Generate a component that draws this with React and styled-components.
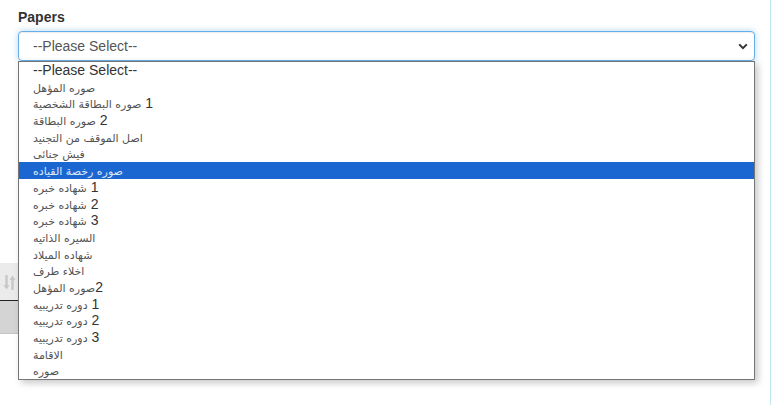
import React from "react";
import styled, { createGlobalStyle } from "styled-components";

const options = [
    { text: "--Please Select--", latin: true },
    { text: "صوره المؤهل" },
    { text: "صوره البطاقة الشخصية", num: " 1" },
    { text: "صوره البطاقة", num: " 2" },
    { text: "اصل الموقف من التجنيد" },
    { text: "فيش جنائى" },
    { text: "صوره رخصة القياده", selected: true },
    { text: "شهاده خبره", num: " 1" },
    { text: "شهاده خبره", num: " 2" },
    { text: "شهاده خبره", num: " 3" },
    { text: "السيره الذاتيه" },
    { text: "شهاده الميلاد" },
    { text: "اخلاء طرف" },
    { text: "صوره المؤهل", num: "2" },
    { text: "دوره تدريبيه", num: " 1" },
    { text: "دوره تدريبيه", num: " 2" },
    { text: "دوره تدريبيه", num: " 3" },
    { text: "الاقامة" },
    { text: "صوره" },
];

function App() {
    return (
        <>
            <GlobalStyle />
            <Panel>
                <FormGroup>
                    <Label>Papers</Label>
                    <SelectWrap>
                        <SelectBox>
                            <span>--Please Select--</span>
                            <svg width="10" height="7" viewBox="0 0 10 7">
                                <path
                                    d="M1.2 1.4 L5 5.2 L8.8 1.4"
                                    fill="none"
                                    stroke="#333"
                                    strokeWidth="2"
                                />
                            </svg>
                        </SelectBox>
                        <OptionList>
                            {options.map((o, i) => (
                                <Option key={i} $selected={o.selected}>
                                    {o.latin ? (
                                        o.text
                                    ) : (
                                        <>
                                            <Arabic dir="rtl">{o.text}</Arabic>
                                            {o.num}
                                        </>
                                    )}
                                </Option>
                            ))}
                        </OptionList>
                    </SelectWrap>
                </FormGroup>
                <TableHead>
                    <SortCell>
                        <svg width="13" height="17" viewBox="0 0 13 17">
                            <path d="M3.5 1 V14" stroke="#c8c8c8" strokeWidth="2.4" />
                            <path d="M0.5 11 L3.5 15.5 L6.5 11 Z" fill="#c8c8c8" />
                            <path d="M9.5 16 V3" stroke="#c8c8c8" strokeWidth="2.4" />
                            <path d="M6.5 6 L9.5 1.5 L12.5 6 Z" fill="#c8c8c8" />
                        </svg>
                    </SortCell>
                </TableHead>
                <TableRow />
            </Panel>
        </>
    );
}

const GlobalStyle = createGlobalStyle`
    body {
        margin: 0;
        background: #fff;
        font-family: "Liberation Sans", Arial, sans-serif;
        color: #333;
    }
`;

const Panel = styled.div`
    width: 770px;
    height: 405px;
    border-right: 1px solid #bce8f1;
    overflow: hidden;
`;

const FormGroup = styled.div`
    padding: 9px 15px 0 18px;
`;

const Label = styled.div`
    font-size: 14px;
    font-weight: bold;
    line-height: 16px;
    color: #333;
    margin-bottom: 6px;
`;

const SelectWrap = styled.div`
    position: relative;
    width: 737px;
`;

const SelectBox = styled.div`
    height: 30px;
    box-sizing: border-box;
    border: 1px solid #66afe9;
    border-radius: 4px;
    box-shadow: inset 0 1px 1px rgba(0, 0, 0, 0.075),
        0 0 6px rgba(102, 175, 233, 0.5);
    display: flex;
    align-items: center;
    justify-content: space-between;
    padding: 0 6px 0 14px;
    font-size: 14px;
    color: #555;
    background: #fff;
`;

const OptionList = styled.div`
    position: absolute;
    top: 30px;
    left: 0;
    width: 737px;
    box-sizing: border-box;
    border: 1px solid #767676;
    background: #fff;
    box-shadow: 3px 3px 7px rgba(0, 0, 0, 0.22);
    z-index: 5;
`;

const Option = styled.div`
    height: 16.7px;
    line-height: 16.7px;
    padding-left: 14px;
    font-size: 14px;
    white-space: nowrap;
    color: ${(p) => (p.$selected ? "#fff" : "#333")};
    background: ${(p) => (p.$selected ? "#1a67d2" : "transparent")};
`;

const Arabic = styled.span`
    font-family: "DejaVu Sans", sans-serif;
    font-size: 11px;
    unicode-bidi: isolate;
    opacity: ${0.85};
`;

const TableHead = styled.div`
    margin-top: 202px;
    height: 37px;
    width: 740px;
    background: #ebebeb;
    border-bottom: 1px solid #222;
    display: flex;
    align-items: center;
`;

const SortCell = styled.div`
    width: 18px;
    display: flex;
    justify-content: center;
    padding-top: 2px;
`;

const TableRow = styled.div`
    height: 32px;
    width: 740px;
    background: #d4d4d4;
    border-bottom: 1px solid #c4c4c4;
`;

export default App;
